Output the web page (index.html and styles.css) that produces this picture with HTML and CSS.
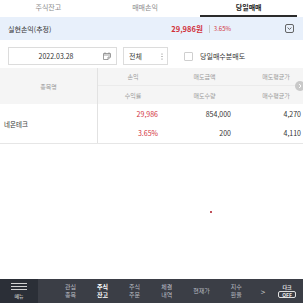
FILE: index.html
```html
<!DOCTYPE html>
<html lang="ko">

<head>
  <meta charset="UTF-8">
  <meta name="viewport" content="width=device-width, initial-scale=1.0">
  <title>당일매매</title>
  <link rel="stylesheet" href="styles.css">
</head>

<body>
  <div class="app">
    <nav class="tabs">
      <div class="tab">주식잔고</div>
      <div class="tab">매매손익</div>
      <div class="tab active">당일매매</div>
    </nav>

    <div class="summary">
      <span class="summary-label">실현손익(추정)</span>
      <span class="summary-value">29,986원</span>
      <span class="summary-sep"></span>
      <span class="summary-rate">3.65%</span>
      <span class="summary-toggle">
        <svg width="9" height="9" viewBox="0 0 9 9">
          <rect x="0.5" y="0.5" width="8" height="8" rx="1.5" fill="none" stroke="#555" stroke-width="0.9"/>
          <path d="M2.6 3.6 L4.5 5.4 L6.4 3.6" fill="none" stroke="#555" stroke-width="0.9"/>
        </svg>
      </span>
    </div>

    <div class="filters">
      <div class="date-box">
        <span class="date-text">2022.03.28</span>
        <svg width="8" height="8" viewBox="0 0 8 8">
          <path d="M0.5 1.5 H7.5 V5 L5 7.5 H0.5 Z" fill="none" stroke="#888" stroke-width="0.8"/>
          <path d="M0.5 3 H7.5 M2 0.3 V2 M6 0.3 V2 M5 7.5 V5 H7.5" fill="none" stroke="#888" stroke-width="0.8"/>
        </svg>
      </div>
      <div class="select-box">
        <span>전체</span>
        <svg width="2" height="7" viewBox="0 0 2 7">
          <circle cx="1" cy="1" r="0.6" fill="#777"/>
          <circle cx="1" cy="3.5" r="0.6" fill="#777"/>
          <circle cx="1" cy="6" r="0.6" fill="#777"/>
        </svg>
      </div>
      <label class="check">
        <span class="check-box"></span>
        당일매수분매도
      </label>
    </div>

    <div class="table-wrap">
      <div class="grid head">
        <div class="cell name">종목명</div>
        <div class="cell top">손익</div>
        <div class="cell top">매도금액</div>
        <div class="cell top">매도평균가</div>
        <div class="cell">수익률</div>
        <div class="cell">매도수량</div>
        <div class="cell">매수평균가</div>
      </div>
      <div class="grid body">
        <div class="cell name">네온테크</div>
        <div class="cell num up">29,986</div>
        <div class="cell num">854,000</div>
        <div class="cell num">4,270</div>
        <div class="cell num up">3.65%</div>
        <div class="cell num">200</div>
        <div class="cell num">4,110</div>
      </div>
      <span class="scroll-btn">
        <svg width="10" height="10" viewBox="0 0 10 10">
          <circle cx="5" cy="5" r="5" fill="#c9c9c9"/>
          <path d="M4.2 3 L6 5 L4.2 7" fill="none" stroke="#fff" stroke-width="1"/>
        </svg>
      </span>
    </div>

    <div class="empty">
      <span class="touch-dot"></span>
    </div>

    <footer class="bottom-nav">
      <div class="menu">
        <svg width="16" height="7" viewBox="0 0 16 7">
          <path d="M0 0.5 H16 M0 3.5 H16 M0 6.5 H16" stroke="#e6e6e6" stroke-width="0.9"/>
        </svg>
        <span>메뉴</span>
      </div>
      <div class="nav-items">
        <div class="nav-item">관심<br>종목</div>
        <div class="nav-item active">주식<br>잔고</div>
        <div class="nav-item">주식<br>주문</div>
        <div class="nav-item">체결<br>내역</div>
        <div class="nav-item">현재가</div>
        <div class="nav-item">지수<br>환율</div>
      </div>
      <div class="nav-more">&gt;</div>
      <div class="dark-toggle">
        <span>다크</span>
        <span class="off">OFF</span>
      </div>
    </footer>
  </div>
</body>

</html>
```

FILE: styles.css
```css
body {
  margin: 0;
  padding: 0;
  background-color: #fff;
  font-family: "Noto Sans CJK KR", "Noto Sans", sans-serif;
  color: #333;
}

.app {
  width: 303px;
  height: 303px;
  display: flex;
  flex-direction: column;
  overflow: hidden;
}

/* tabs */
.tabs {
  display: flex;
  height: 17px;
}

.tab {
  flex: 1;
  text-align: center;
  font-size: 7px;
  line-height: 14px;
  color: #8a8a8a;
}

.tab.active {
  color: #222;
  font-weight: bold;
  margin: 0 6px 0 7px;
  border-bottom: 2px solid #2b2b2b;
}

/* summary */
.summary {
  display: flex;
  align-items: center;
  height: 23px;
  padding: 0 9px 0 8px;
  background-color: #e8f0fb;
  font-size: 7px;
}

.summary-label {
  flex: 1;
  color: #333;
}

.summary-value {
  color: #d2313c;
  font-weight: bold;
  font-size: 7.5px;
}

.summary-sep {
  width: 1px;
  height: 8px;
  margin: 0 4px 0 6px;
  background-color: #c9c9c9;
}

.summary-rate {
  color: #d2313c;
  font-size: 6px;
}

.summary-toggle {
  display: flex;
  margin-left: 54px;
}

/* filters */
.filters {
  display: flex;
  align-items: flex-start;
  height: 28px;
  padding: 7px 0 0 8px;
  box-sizing: border-box;
  font-size: 7px;
}

.date-box {
  display: flex;
  align-items: center;
  width: 109px;
  height: 18px;
  padding-right: 5px;
  box-sizing: border-box;
  border: 1px solid #dcdcdc;
}

.date-text {
  flex: 1;
  text-align: center;
  color: #333;
}

.select-box {
  display: flex;
  align-items: center;
  justify-content: space-between;
  width: 45px;
  height: 18px;
  margin-left: 6px;
  padding: 0 4px 0 5px;
  box-sizing: border-box;
  border: 1px solid #dcdcdc;
}

.check {
  display: flex;
  align-items: center;
  height: 18px;
  margin-left: 16px;
  color: #333;
}

.check-box {
  width: 9px;
  height: 9px;
  margin-right: 7px;
  box-sizing: border-box;
  border: 1px solid #cfcfcf;
  border-radius: 1px;
  background-color: #fff;
}

/* table */
.table-wrap {
  position: relative;
  width: 303px;
  overflow: hidden;
}

.grid {
  display: grid;
  width: 311px;
  grid-template-columns: 98px 70px 73px 70px;
}

.head {
  grid-template-rows: 18px 18px;
  background-color: #f5f5f5;
  font-size: 6px;
  color: #9a9a9a;
}

.body {
  grid-template-rows: 19px 20px;
  border-bottom: 1px solid #e6e6e6;
  font-size: 7px;
  color: #333;
}

.cell {
  display: flex;
  align-items: center;
  justify-content: center;
}

.cell.top {
  border-bottom: 1px solid #ebebeb;
}

.cell.name {
  grid-row: span 2;
  border-right: 1px solid #e2e2e2;
}

.body .cell.name {
  justify-content: flex-start;
  padding-left: 4px;
  font-size: 6.5px;
}

.cell.num {
  justify-content: flex-end;
  padding-right: 10px;
}

.cell.up {
  color: #d2313c;
}

.scroll-btn {
  position: absolute;
  top: 13px;
  right: -2px;
  display: flex;
}

.empty {
  flex: 1;
  position: relative;
}

.touch-dot {
  position: absolute;
  left: 210px;
  top: 67px;
  width: 2px;
  height: 2px;
  background-color: #c0505a;
}

/* bottom navigation */
.bottom-nav {
  display: flex;
  align-items: center;
  height: 24px;
  background-color: #3b3e46;
  color: #b9bcc2;
  font-size: 6px;
}

.menu {
  display: flex;
  flex-direction: column;
  align-items: center;
  justify-content: center;
  gap: 3px;
  width: 38px;
  height: 100%;
  background-color: #2b2f37;
  color: #e6e6e6;
  font-size: 5px;
  line-height: 6px;
}

.nav-items {
  display: flex;
  align-items: center;
  gap: 21px;
  padding-left: 27px;
}

.nav-item {
  text-align: center;
  line-height: 8.5px;
}

.nav-item.active {
  color: #fff;
  font-weight: bold;
}

.nav-more {
  margin-left: 19px;
  font-size: 8px;
  color: #d0d0d0;
}

.dark-toggle {
  display: flex;
  flex-direction: column;
  align-items: center;
  gap: 1px;
  margin-left: 13px;
  color: #e8e8e8;
  font-size: 5px;
  line-height: 6px;
  font-weight: bold;
}

.dark-toggle .off {
  padding: 0 3px;
  line-height: 5.5px;
  border: 1px solid #e0e0e0;
  border-radius: 2px;
}
```
